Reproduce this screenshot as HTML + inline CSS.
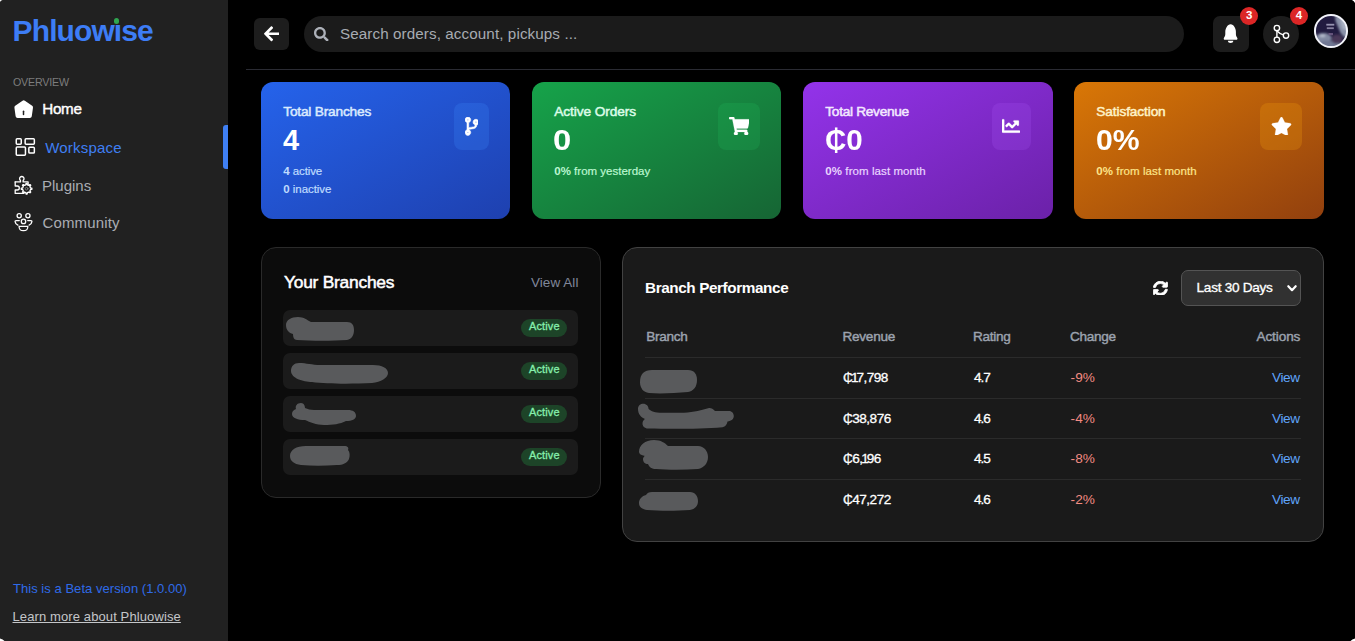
<!DOCTYPE html>
<html lang="en">
<head>
<meta charset="utf-8">
<title>Phluowise</title>
<style>
*{box-sizing:border-box;margin:0;padding:0}
html,body{width:1355px;height:641px;overflow:hidden;background:#000;font-family:"Liberation Sans",sans-serif;color:#fff}
.abs{position:absolute}
.t{position:absolute;white-space:nowrap;line-height:1}
.t b{font-weight:700;-webkit-text-stroke:0}
#side{position:absolute;left:0;top:0;width:228px;height:641px;background:#212121}
.badge{position:absolute;width:18px;height:18px;border-radius:9px;background:#dc2626}
.card{position:absolute;top:82px;height:136.7px;border-radius:12px}
.ib{position:absolute;top:103px;height:47px;border-radius:8px;background:rgba(255,255,255,0.06)}
.panel{position:absolute;border:1px solid #2a2a2a;border-radius:15px}
.brow{position:absolute;left:283px;width:295px;height:36px;border-radius:7px;background:#1b1b1b}
.pill{position:absolute;left:521px;width:46px;height:18px;border-radius:9px;background:#1d4428}
.hr{position:absolute;left:645px;width:656px;height:1px;background:#2b2b2b}
</style>
</head>
<body>

<!-- SIDEBAR -->
<div id="side">
<div class="t" style="top:15.50px;font-size:30px;color:#3d7df6;left:12.60px;font-weight:700;letter-spacing:-0.9px;">Phluow&#305;se</div>
<div class="abs" style="left:113.9px;top:18.2px;width:5.6px;height:5.6px;border-radius:50%;background:#2fa650"></div>
<div class="t" style="top:76.84px;font-size:10.7px;color:#7d7d7d;left:13.00px;letter-spacing:-0.2px;">OVERVIEW</div>
<div class="t" style="top:101.43px;font-size:15.2px;color:#fff;left:42.30px;letter-spacing:-0.3px;-webkit-text-stroke:0.4px #fff;">Home</div>
<div class="t" style="top:140.30px;font-size:15px;color:#3f7ff3;left:45.20px;letter-spacing:0.2px;">Workspace</div>
<div class="t" style="top:178.40px;font-size:15px;color:#aaadb3;left:42.00px;">Plugins</div>
<div class="t" style="top:215.20px;font-size:15px;color:#aaadb3;left:42.50px;letter-spacing:0.15px;">Community</div>
<div class="abs" style="left:223px;top:125px;width:5px;height:44px;background:#3f7ff3;border-radius:3px 0 0 3px"></div>
<svg class="abs" style="left:0;top:90px" width="60" height="150" viewBox="0 90 60 150" fill="none" stroke="#fff" stroke-width="1.4" stroke-linejoin="round" stroke-linecap="round">
    <!-- home -->
    <path d="M23.700 102.300 L31 107.500 L29.800 116 H17.600 L16.400 107.500 Z" fill="#fff" stroke-width="4"/>
    <path d="M23.5 111.2 V114.6" stroke="#212121" stroke-width="1.5"/>
    <!-- workspace -->
    <g stroke-width="1.500">
    <rect x="16.250" y="138.850" width="5" height="5.300" rx="0.900"/>
    <rect x="25.150" y="138.850" width="9.200" height="5.300" rx="0.900"/>
    <rect x="16.250" y="147.050" width="9.200" height="8.100" rx="0.900"/>
    <rect x="28.850" y="147.250" width="5.500" height="5.800" rx="0.900"/>
    </g>
    <!-- plugins: puzzle + gear -->
    <path d="M15.200 181.900 H20.500 V180.500 A2.220 2.220 0 1 1 23.100 180.500 V181.900 H28.100 V184.500" stroke-width="1.300"/>
    <path d="M15.200 181.900 V186 H17.300 a2 2 0 0 1 0 4 H15.200 V193.400 H24" stroke-width="1.300"/>
    <path d="M30.52 187.92 L31.87 188.16 L31.87 189.24 L30.52 189.48 L29.93 190.92 L30.71 192.05 L29.95 192.81 L28.82 192.03 L27.38 192.62 L27.14 193.97 L26.06 193.97 L25.82 192.62 L24.38 192.03 L23.25 192.81 L22.49 192.05 L23.27 190.92 L22.68 189.48 L21.33 189.24 L21.33 188.16 L22.68 187.92 L23.27 186.48 L22.49 185.35 L23.25 184.59 L24.38 185.37 L25.82 184.78 L26.06 183.43 L27.14 183.43 L27.38 184.78 L28.82 185.37 L29.95 184.59 L30.71 185.35 L29.93 186.48Z" fill="#212121" stroke-width="1.350"/>
    <circle cx="26.6" cy="188.7" r="1.300" stroke="#8d8d8d" stroke-width="0.800"/>
    <!-- community -->
    <circle cx="19.200" cy="215.800" r="2.100" stroke-width="1.300"/>
    <circle cx="27.900" cy="215.800" r="2.100" stroke-width="1.300"/>
    <circle cx="23.500" cy="221.400" r="2.200" stroke-width="1.300"/>
    <path d="M19.300 220.600 h-3.300 q-1 0 -0.900 1 q0.400 2.600 2.800 3.600" stroke-width="1.300"/>
    <path d="M27.700 220.600 h3.300 q1 0 0.900 1 q-0.400 2.600 -2.800 3.600" stroke-width="1.300"/>
    <path d="M19.100 226.300 h8.700 q0.300 4.400 -4.350 4.400 q-4.650 0 -4.350 -4.400 z" stroke-width="1.300"/>
  </svg>
<div class="t" style="top:582.00px;font-size:13px;color:#2f6be8;left:13.00px;letter-spacing:0.04px;">This is a Beta version (1.0.00)</div>
<div class="t" style="top:609.80px;font-size:13px;color:#c4c6c9;left:12.50px;letter-spacing:0.11px;text-decoration:underline;">Learn more about Phluowise</div>
</div>
<!-- TOPBAR -->
<div class="abs" style="left:254px;top:18px;width:35px;height:32px;border-radius:6px;background:#1d1d1d"></div>
<div class="abs" style="left:304px;top:16px;width:880px;height:36px;border-radius:18px;background:#1b1b1b"></div>
<div class="t" style="top:26.13px;font-size:15.2px;color:#a7abb2;left:340.00px;letter-spacing:0.1px;">Search orders, account, pickups ...</div>
<div class="abs" style="left:246px;top:69px;width:1109px;height:1px;background:#2a2b33"></div>
<div class="abs" style="left:1213px;top:16px;width:36px;height:36px;border-radius:7px;background:#1c1c1c"></div>
<div class="abs" style="left:1263px;top:16px;width:36px;height:36px;border-radius:18px;background:#1c1c1c"></div>
<div class="badge" style="left:1240px;top:7px"></div><div class="badge" style="left:1290px;top:7px"></div>
<div class="t" style="top:10.47px;font-size:11.5px;color:#fff;left:1245.90px;font-weight:700;">3</div>
<div class="t" style="top:10.47px;font-size:11.5px;color:#fff;left:1295.80px;font-weight:700;">4</div>
<svg class="abs" style="left:1313px;top:13px" width="36" height="36" viewBox="1313 13 36 36">
  <defs><clipPath id="avc"><circle cx="1331" cy="31" r="15.5"/></clipPath><filter id="avb" x="-30%" y="-30%" width="160%" height="160%"><feGaussianBlur stdDeviation="1.1"/></filter></defs>
  <g clip-path="url(#avc)">
    <rect x="1313" y="13" width="36" height="36" fill="#211b40"/>
    <g filter="url(#avb)">
      <path d="M1335 14 L1350 14 L1350 38 L1344 37 L1340.500 33 L1338 27 L1335.500 21 Z" fill="#8991a8"/>
      <path d="M1340 17 L1348 18 L1348 31 L1343 29 L1341 23 Z" fill="#a9b1c3"/>
      <ellipse cx="1323.500" cy="38" rx="8" ry="5" fill="#828aa3"/>
      <ellipse cx="1329" cy="44.500" rx="12" ry="4" fill="#6f7793"/>
      <ellipse cx="1337" cy="39" rx="5.500" ry="4.500" fill="#4a3858"/>
      <ellipse cx="1322.500" cy="35.800" rx="3" ry="1.300" fill="#bcc3d2"/>
    </g>
    <rect x="1326.300" y="23.800" width="8" height="1.800" fill="#c9c6e0" opacity="0.7"/>
    <rect x="1326.800" y="27.300" width="7" height="1.800" fill="#c9c6e0" opacity="0.6"/>
    <rect x="1328.500" y="33" width="4.500" height="2.200" fill="#76628a" opacity="0.8"/>
  </g>
  <circle cx="1331" cy="31" r="16.050" fill="none" stroke="#f2f3fa" stroke-width="2"/>
</svg>
<svg class="abs" style="left:264.00px;top:25.30px" width="15.31" height="17.50" viewBox="0 0 448 512"><path fill="#fff" d="M257.500 445.100l-22.200 22.200c-9.400 9.400-24.600 9.400-33.900 0L7 273c-9.400-9.400-9.400-24.600 0-33.900L201.400 44.700c9.400-9.400 24.600-9.400 33.900 0l22.200 22.200c9.500 9.500 9.300 25-.4 34.300L136.600 216H424c13.300 0 24 10.700 24 24v32c0 13.300-10.700 24-24 24H136.600l120.500 114.800c9.800 9.300 10 24.800.4 34.300z"/></svg>
<svg class="abs" style="left:314.00px;top:26.70px" width="14.60" height="14.60" viewBox="0 0 512 512"><path fill="#adb1b9" d="M505 442.700L405.300 343c-4.500-4.500-10.600-7-17-7H372c27.600-35.300 44-79.700 44-128C416 93.100 322.900 0 208 0S0 93.100 0 208s93.100 208 208 208c48.300 0 92.700-16.400 128-44v16.300c0 6.400 2.500 12.500 7 17l99.700 99.700c9.400 9.400 24.600 9.400 33.900 0l28.300-28.300c9.400-9.400 9.400-24.600.1-34zM208 336c-70.700 0-128-57.200-128-128 0-70.700 57.200-128 128-128 70.700 0 128 57.200 128 128 0 70.700-57.200 128-128 128z"/></svg>
<svg class="abs" style="left:1205px;top:0" width="110" height="60" viewBox="1205 0 110 60">
  <path fill="#fff" d="M1230.600 24.300C1229 24.300 1227.700 25.300 1226.700 27.100C1225.700 28.900 1225.300 30.200 1225.300 31.700V34C1225.300 35.800 1224.600 36.900 1223.900 37.900C1223.400 38.800 1223.900 39.700 1225 39.700H1236.200C1237.300 39.700 1237.800 38.800 1237.300 37.900C1236.600 36.900 1235.900 35.800 1235.900 34V31.700C1235.900 30.200 1235.500 28.900 1234.500 27.100C1233.500 25.300 1232.200 24.300 1230.600 24.300Z"/>
  <path fill="#fff" d="M1227.900 40.800H1233.300C1233.300 42.100 1232.100 43.100 1230.600 43.100C1229.100 43.100 1227.900 42.100 1227.900 40.800Z"/>
  <g fill="none" stroke="#fff" stroke-width="1.400" stroke-linecap="round">
    <circle cx="1276.900" cy="28.100" r="2.700"/>
    <circle cx="1276.900" cy="39.800" r="2.700"/>
    <circle cx="1286" cy="35.600" r="2.700"/>
    <path d="M1276.900 30.800V37.100"/>
    <path d="M1277.300 31.200Q1279.500 33.600 1283.400 34.900"/>
  </g>
</svg>
<!-- CARDS -->
<div class="card" style="left:261px;width:249px;background:linear-gradient(to bottom right,#2563eb,#1e40af)"></div>
<div class="ib" style="left:454px;width:35px;background:rgba(59,130,246,0.28)"></div>
<svg class="abs" style="left:464.50px;top:117.30px" width="13.80" height="18.40" viewBox="0 0 384 512"><path fill="#fff" stroke="#fff" stroke-width="16" d="M384 144c0-44.200-35.800-80-80-80s-80 35.800-80 80c0 36.400 24.300 67.100 57.500 76.800-.600 16.100-4.200 28.500-11 36.900-15.400 19.200-49.300 22.400-85.200 25.700-28.200 2.600-57.400 5.400-81.300 16.900v-144c32.500-10.200 56-40.500 56-76.300 0-44.200-35.800-80-80-80S0 35.800 0 80c0 35.800 23.500 66.100 56 76.300v199.300C23.500 365.900 0 396.200 0 432c0 44.200 35.800 80 80 80s80-35.800 80-80c0-34-21.200-63.100-51.200-74.600 3.100-5.200 7.800-9.800 14.900-13.400 16.200-8.200 40.400-10.400 66.100-12.800 42.200-3.900 90-8.400 118.200-43.400 14-17.400 21.100-39.800 21.600-67.900 31.600-10.800 54.400-40.700 54.400-75.900zM80 64c8.800 0 16 7.200 16 16s-7.200 16-16 16-16-7.200-16-16 7.200-16 16-16zm0 384c-8.800 0-16-7.200-16-16s7.200-16 16-16 16 7.200 16 16-7.200 16-16 16zm224-320c8.800 0 16 7.200 16 16s-7.200 16-16 16-16-7.200-16-16 7.200-16 16-16z"/></svg>
<div class="t" style="top:104.60px;font-size:13.7px;color:#dbeafe;left:283.30px;letter-spacing:-0.2px;-webkit-text-stroke:0.5px #dbeafe;">Total Branches</div>
<div class="t" style="top:126.35px;font-size:29px;color:#fff;left:283.00px;font-weight:700;">4</div>
<div class="t" style="top:166.17px;font-size:11.5px;color:#bfdbfe;left:283.30px;letter-spacing:-0.1px;-webkit-text-stroke:0.2px #bfdbfe;"><b>4</b> active</div>
<div class="t" style="top:184.17px;font-size:11.5px;color:#bfdbfe;left:283.30px;letter-spacing:-0.05px;-webkit-text-stroke:0.2px #bfdbfe;"><b>0</b> inactive</div>
<div class="card" style="left:532px;width:249px;background:linear-gradient(to bottom right,#16a34a,#166534)"></div>
<div class="ib" style="left:718px;width:42px;background:rgba(34,197,94,0.2)"></div>
<svg class="abs" style="left:728.80px;top:116.90px" width="20.70" height="18.40" viewBox="0 0 576 512"><path fill="#fff" stroke="#fff" stroke-width="6" d="M528.120 301.319l47.273-208C578.806 78.301 567.391 64 551.990 64H159.208l-9.166-44.810C147.758 8.021 137.930 0 126.529 0H24C10.745 0 0 10.745 0 24v16c0 13.255 10.745 24 24 24h69.883l70.248 343.435C147.325 417.100 136 435.222 136 456c0 30.928 25.072 56 56 56s56-25.072 56-56c0-15.674-6.447-29.835-16.824-40h209.647C430.447 426.165 424 440.326 424 456c0 30.928 25.072 56 56 56s56-25.072 56-56c0-22.172-12.888-41.332-31.579-50.405l5.517-24.276c3.413-15.018-8.002-29.319-23.403-29.319H218.117l-6.545-32h293.145c11.206 0 20.920-7.754 23.403-18.681z"/></svg>
<div class="t" style="top:104.60px;font-size:13.7px;color:#dcfce7;left:554.30px;letter-spacing:-0.1px;-webkit-text-stroke:0.5px #dcfce7;">Active Orders</div>
<div class="t" style="top:126.35px;font-size:29px;color:#fff;left:553.20px;font-weight:700;transform:scaleX(1.13);transform-origin:0 0;">0</div>
<div class="t" style="top:166.17px;font-size:11.5px;color:#bbf7d0;left:554.30px;-webkit-text-stroke:0.2px #bbf7d0;"><b>0%</b> from yesterday</div>
<div class="card" style="left:803px;width:250px;background:linear-gradient(to bottom right,#9333ea,#6b21a8)"></div>
<div class="ib" style="left:992px;width:39px;background:rgba(168,85,247,0.22)"></div>
<svg class="abs" style="left:1002.00px;top:117.00px" width="18.00" height="18.00" viewBox="0 0 512 512"><path fill="#fff" stroke="#fff" stroke-width="6" d="M496 384H64V80c0-8.840-7.160-16-16-16H16C7.160 64 0 71.160 0 80v336c0 17.670 14.330 32 32 32h464c8.840 0 16-7.160 16-16v-32c0-8.840-7.160-16-16-16zM464 96H345.940c-21.380 0-32.090 25.850-16.970 40.970l32.400 32.400L288 242.750l-73.370-73.370c-12.500-12.500-32.760-12.500-45.250 0l-68.690 68.690c-6.250 6.250-6.250 16.380 0 22.630l22.620 22.620c6.250 6.250 16.380 6.250 22.630 0L192 237.250l73.370 73.370c12.500 12.500 32.760 12.500 45.250 0l96-96 32.400 32.400c15.120 15.120 40.970 4.410 40.970-16.970V112c.010-8.840-7.150-16-15.990-16z"/></svg>
<div class="t" style="top:104.60px;font-size:13.7px;color:#f3e8ff;left:825.30px;letter-spacing:-0.3px;-webkit-text-stroke:0.5px #f3e8ff;">Total Revenue</div>
<div class="t" style="top:126.35px;font-size:29px;color:#fff;left:824.50px;font-weight:700;transform:scaleX(1.02);transform-origin:0 0;">&#8373;0</div>
<div class="t" style="top:166.17px;font-size:11.5px;color:#e9d5ff;left:825.30px;letter-spacing:0.08px;-webkit-text-stroke:0.2px #e9d5ff;"><b>0%</b> from last month</div>
<div class="card" style="left:1074px;width:250px;background:linear-gradient(to bottom right,#d97706,#92400e)"></div>
<div class="ib" style="left:1260px;width:42px;background:rgba(245,158,11,0.25)"></div>
<svg class="abs" style="left:1270.80px;top:116.80px" width="20.93" height="18.60" viewBox="0 0 576 512"><path fill="#fff" stroke="#fff" stroke-width="6" d="M259.300 17.800L194 150.200 47.900 171.500c-26.200 3.800-36.700 36.100-17.700 54.600l105.700 103-25 145.500c-4.500 26.300 23.200 46 46.400 33.700L288 439.600l130.700 68.700c23.200 12.200 50.900-7.400 46.400-33.700l-25-145.500 105.700-103c19-18.500 8.500-50.800-17.700-54.600L382 150.200 316.700 17.800c-11.700-23.600-45.600-23.900-57.400 0z"/></svg>
<div class="t" style="top:104.60px;font-size:13.7px;color:#fef3c7;left:1096.30px;letter-spacing:-0.12px;-webkit-text-stroke:0.5px #fef3c7;">Satisfaction</div>
<div class="t" style="top:126.35px;font-size:29px;color:#fff;left:1096.00px;font-weight:700;transform:scaleX(1.04);transform-origin:0 0;">0%</div>
<div class="t" style="top:166.17px;font-size:11.5px;color:#fde68a;left:1096.30px;letter-spacing:0.08px;-webkit-text-stroke:0.2px #fde68a;"><b>0%</b> from last month</div>
<!-- YOUR BRANCHES -->
<div class="panel" style="left:261px;top:247px;width:340px;height:251px;background:#0c0c0c"></div>
<div class="t" style="top:273.87px;font-size:17.4px;color:#fff;left:284.00px;letter-spacing:-0.25px;-webkit-text-stroke:0.5px #fff;">Your Branches</div>
<div class="t" style="top:275.57px;font-size:13.5px;color:#80879a;left:531.00px;letter-spacing:0.05px;">View All</div>
<div class="brow" style="top:310px"></div><div class="pill" style="top:319px"></div>
<div class="t" style="top:320.59px;font-size:11px;color:#86efac;left:528.90px;letter-spacing:0.15px;-webkit-text-stroke:0.3px #86efac;">Active</div>
<div class="brow" style="top:353px"></div><div class="pill" style="top:362px"></div>
<div class="t" style="top:363.59px;font-size:11px;color:#86efac;left:528.90px;letter-spacing:0.15px;-webkit-text-stroke:0.3px #86efac;">Active</div>
<div class="brow" style="top:396px"></div><div class="pill" style="top:405px"></div>
<div class="t" style="top:406.59px;font-size:11px;color:#86efac;left:528.90px;letter-spacing:0.15px;-webkit-text-stroke:0.3px #86efac;">Active</div>
<div class="brow" style="top:439px"></div><div class="pill" style="top:448px"></div>
<div class="t" style="top:449.59px;font-size:11px;color:#86efac;left:528.90px;letter-spacing:0.15px;-webkit-text-stroke:0.3px #86efac;">Active</div>
<!-- BRANCH PERFORMANCE -->
<div class="panel" style="left:622px;top:247px;width:702px;height:295px;background:#1a1a1a;border-color:#424242"></div>
<div class="t" style="top:280.35px;font-size:15.3px;color:#fff;left:645.00px;font-weight:700;letter-spacing:-0.4px;">Branch Performance</div>
<svg class="abs" style="left:1153.40px;top:280.60px" width="14.80" height="14.80" viewBox="0 0 512 512"><path fill="#fff" stroke="#fff" stroke-width="28" stroke-linejoin="round" d="M370.720 133.280C339.458 104.008 298.888 87.962 255.848 88c-77.458.068-144.328 53.178-162.791 126.850-1.344 5.363-6.122 9.150-11.651 9.150H24.103c-7.498 0-13.194-6.807-11.807-14.176C33.933 94.924 134.813 8 256 8c66.448 0 126.791 26.136 171.315 68.685L463.030 40.970C478.149 25.851 504 36.559 504 57.941V192c0 13.255-10.745 24-24 24H345.941c-21.382 0-32.090-25.851-16.971-40.971l41.750-41.749zM32 296h134.059c21.382 0 32.090 25.851 16.971 40.971l-41.750 41.750c31.262 29.273 71.835 45.319 114.876 45.280 77.418-.07 144.315-53.144 162.787-126.849 1.344-5.363 6.122-9.150 11.651-9.150h57.304c7.498 0 13.194 6.807 11.807 14.176C478.067 417.076 377.187 504 256 504c-66.448 0-126.791-26.136-171.315-68.685L48.970 471.030C33.851 486.149 8 475.441 8 454.059V320c0-13.255 10.745-24 24-24z"/></svg>
<div class="abs" style="left:1181px;top:270px;width:120px;height:36px;border-radius:7px;background:#313131;border:1px solid #545454"></div>
<div class="t" style="top:280.69px;font-size:13.6px;color:#fff;left:1196.60px;letter-spacing:-0.28px;-webkit-text-stroke:0.3px #fff;">Last 30 Days</div>
<svg class="abs" style="left:1285px;top:282px" width="14" height="12" viewBox="1285 282 14 12"><path d="M1288.3 286.2L1292 290.2L1295.700 286.200" fill="none" stroke="#fff" stroke-width="2.200" stroke-linecap="round" stroke-linejoin="round"/></svg>
<div class="t" style="top:329.79px;font-size:13.6px;color:#9ca3af;left:646.20px;letter-spacing:-0.3px;-webkit-text-stroke:0.42px #9ca3af;">Branch</div>
<div class="t" style="top:329.79px;font-size:13.6px;color:#9ca3af;left:842.60px;letter-spacing:-0.3px;-webkit-text-stroke:0.42px #9ca3af;">Revenue</div>
<div class="t" style="top:329.79px;font-size:13.6px;color:#9ca3af;left:973.00px;letter-spacing:-0.3px;-webkit-text-stroke:0.42px #9ca3af;">Rating</div>
<div class="t" style="top:329.79px;font-size:13.6px;color:#9ca3af;left:1070.00px;letter-spacing:-0.3px;-webkit-text-stroke:0.42px #9ca3af;">Change</div>
<div class="t" style="top:329.79px;font-size:13.6px;color:#9ca3af;right:54.70px;letter-spacing:-0.1px;-webkit-text-stroke:0.42px #9ca3af;">Actions</div>
<div class="hr" style="top:357px"></div>
<div class="hr" style="top:398px"></div>
<div class="hr" style="top:438px"></div>
<div class="hr" style="top:479px"></div>
<div class="t" style="top:370.69px;font-size:13.6px;color:#fff;left:842.90px;letter-spacing:-0.5px;-webkit-text-stroke:0.3px #fff;">&#8373;<span style="margin:0 -1.6px 0 -1.3px">1</span>7,798</div>
<div class="t" style="top:370.69px;font-size:13.6px;color:#fff;left:973.90px;letter-spacing:-1.0px;-webkit-text-stroke:0.3px #fff;">4.7</div>
<div class="t" style="top:370.69px;font-size:13.6px;color:#f28b82;left:1070.50px;letter-spacing:0.1px;">-9%</div>
<div class="t" style="top:370.69px;font-size:13.6px;color:#60a5fa;right:55.40px;letter-spacing:-0.4px;">View</div>
<div class="t" style="top:411.59px;font-size:13.6px;color:#fff;left:842.90px;letter-spacing:-0.5px;-webkit-text-stroke:0.3px #fff;">&#8373;38,876</div>
<div class="t" style="top:411.59px;font-size:13.6px;color:#fff;left:973.90px;letter-spacing:-1.0px;-webkit-text-stroke:0.3px #fff;">4.6</div>
<div class="t" style="top:411.59px;font-size:13.6px;color:#f28b82;left:1070.50px;letter-spacing:0.1px;">-4%</div>
<div class="t" style="top:411.59px;font-size:13.6px;color:#60a5fa;right:55.40px;letter-spacing:-0.4px;">View</div>
<div class="t" style="top:451.79px;font-size:13.6px;color:#fff;left:842.90px;letter-spacing:-0.5px;-webkit-text-stroke:0.3px #fff;">&#8373;6,<span style="margin:0 -1.6px 0 -1.3px">1</span>96</div>
<div class="t" style="top:451.79px;font-size:13.6px;color:#fff;left:973.90px;letter-spacing:-1.0px;-webkit-text-stroke:0.3px #fff;">4.5</div>
<div class="t" style="top:451.79px;font-size:13.6px;color:#f28b82;left:1070.50px;letter-spacing:0.1px;">-8%</div>
<div class="t" style="top:451.79px;font-size:13.6px;color:#60a5fa;right:55.40px;letter-spacing:-0.4px;">View</div>
<div class="t" style="top:492.69px;font-size:13.6px;color:#fff;left:842.90px;letter-spacing:-0.5px;-webkit-text-stroke:0.3px #fff;">&#8373;47,272</div>
<div class="t" style="top:492.69px;font-size:13.6px;color:#fff;left:973.90px;letter-spacing:-1.0px;-webkit-text-stroke:0.3px #fff;">4.6</div>
<div class="t" style="top:492.69px;font-size:13.6px;color:#f28b82;left:1070.50px;letter-spacing:0.1px;">-2%</div>
<div class="t" style="top:492.69px;font-size:13.6px;color:#60a5fa;right:55.40px;letter-spacing:-0.4px;">View</div>
<!-- BLOBS + MISC OVERLAY -->
<svg class="abs" style="left:0;top:0;z-index:5" width="1355" height="641" viewBox="0 0 1355 641"><path fill="#fff" d="M0 0h2.500Q0.500 0.500 0 2z M1355 0h-3Q1354 1 1355 3z M0 641v-2.500Q3 639 4.500 641z M1355 641v-2.500Q1352 639 1350.500 641z"/></svg>
<svg class="abs" style="left:0;top:0" width="1355" height="641" viewBox="0 0 1355 641">
 <g fill="#595a5c">
  <!-- your branches -->
  <path d="M286 325c0-5 5-8 12-8 6 0 9 3 13 5h36c5 0 7 3 7 8s-2 9-7 10c-15 1-35 1-50 0-3 0-4-3-4-6-4-1-7-4-7-9z"/>
  <path d="M291 371c0-5 3-8 8-8 8 0 12 2 22 2h52c9 0 15 3 15 8s-7 9-16 10c-20 1-45 1-60-1-9 0-21-4-21-11z"/>
  <path d="M292 414c0-3 2-4 4-5-1-3 1-6 5-6 3 0 4 3 4 5 3 1 5 2 9 2h34c5 0 8 2 8 6 0 3-4 5-10 5-6 3-13 4-22 4-8 0-14-3-19-5-7 0-13-2-13-6z"/>
  <path d="M290 456c0-6 6-10 16-10h38c4 0 5 2 4 4 2 2 2 6 1 9-2 4-6 6-12 6-13 1-25 1-36 0-7-1-11-4-11-9z"/>
  <!-- table -->
  <path d="M640 382c0-8 4-12 12-12h36c6 0 9 4 9 10s-3 11-9 12c-13 1-27 2-39 1-6-1-9-5-9-11z"/>
  <path d="M638 409C638 405.500 640.500 403.700 643.300 403.700C646.300 403.700 648.600 406 648.600 409C651 411.500 655 412.600 662 412.800L684 412.800C694 412.500 702 410 709 408.100C711 407.800 713 409 715 411L729 411C732 411 733.800 413.500 733.800 416C733.800 419 731.500 421 727.500 421.500C727 424.500 725.500 426.500 722.500 427.300C700 429.200 670 429 648 428.600C644.500 428.500 642.500 426 642.500 423.500C642.500 421.500 643.500 420 645 419C641 417.500 638 414 638 409Z"/>
  <path d="M639 452c0-7 6-12 15-12 7 0 11 3 14 6h30c6 0 10 5 10 11s-4 11-10 12c-14 1-30 1-42 0-4 0-7-2-8-5-3 0-5-2-5-5 0-1 1-3 2-3-4-1-6-2-6-4z"/>
  <path d="M639 503c0-4 3-7 7-8 1-2 3-3 6-3h38c5 0 8 4 8 9s-3 8-8 9c-14 1-30 1-43 0-5-1-8-3-8-7z"/>
 </g>
</svg>

</body>
</html>
